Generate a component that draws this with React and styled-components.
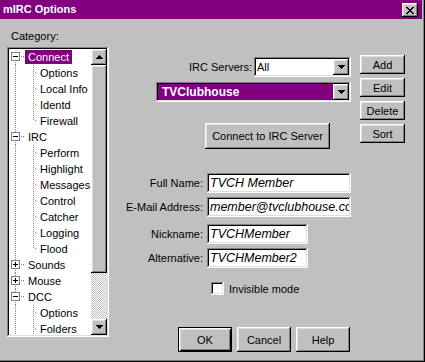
import React from 'react';
import styled, { createGlobalStyle, css } from 'styled-components';

const GlobalStyle = createGlobalStyle`
  html, body { margin: 0; padding: 0; background: #c0c0c0; }
  body { font-family: "Liberation Sans", Arial, sans-serif; font-size: 11px; color: #000; }
  * { box-sizing: border-box; }
`;

const raised = css`
  box-shadow: inset -1px -1px #000, inset 1px 1px #fff, inset -2px -2px #808080, inset 2px 2px #dfdfdf;
`;
const sunken = css`
  box-shadow: inset -1px -1px #fff, inset 1px 1px #808080, inset -2px -2px #dfdfdf, inset 2px 2px #000;
`;

const Window = styled.div`
  width: 425px;
  height: 362px;
  background: #c0c0c0;
  padding-right: 3px;
  box-shadow: inset -1px -1px #000, inset -2px -2px #808080;
  display: flex;
  flex-direction: column;
`;

const TitleBar = styled.div`
  height: 19px;
  flex: none;
  background: #800080;
  color: #fff;
  display: flex;
  justify-content: space-between;
  padding: 0 4px 0 3px;
`;

const TitleText = styled.span`
  font-weight: bold;
  font-size: 11px;
  line-height: 19px;
`;

const CloseButton = styled.div`
  width: 16px;
  height: 14px;
  margin-top: 3px;
  background: #c0c0c0;
  ${raised};
  display: flex;
  align-items: center;
  justify-content: center;
`;

const Body = styled.div`
  flex: 1;
  display: flex;
  padding-left: 7px;
`;

const LeftColumn = styled.div`
  width: 102px;
  padding-top: 11px;
  display: flex;
  flex-direction: column;
`;

const CategoryLabel = styled.div`
  height: 13px;
  line-height: 13px;
  padding-left: 4px;
  margin-bottom: 4px;
`;

const TreeBox = styled.div`
  width: 102px;
  height: 290px;
  background: #fff;
  ${sunken};
  padding: 2px;
  display: flex;
`;

const TreeContent = styled.div`
  flex: 1;
  overflow: hidden;
  display: flex;
  flex-direction: column;
`;

const TreeRow = styled.div`
  height: 16px;
  flex: none;
  display: flex;
  align-items: center;
`;

const TreeLabel = styled.span`
  height: 14px;
  line-height: 14px;
  padding: 0 3px;
  white-space: nowrap;
  background: ${(p) => (p.$selected ? '#800080' : 'transparent')};
  color: ${(p) => (p.$selected ? '#fff' : '#000')};
`;

const ScrollBar = styled.div`
  width: 16px;
  display: flex;
  flex-direction: column;
`;

const ScrollButton = styled.div`
  width: 16px;
  height: 16px;
  flex: none;
  background: #c0c0c0;
  ${raised};
  display: flex;
  align-items: center;
  justify-content: center;
`;

const ScrollTrack = styled.div`
  flex: 1;
  display: flex;
  flex-direction: column;
  background-color: #c0c0c0;
  background-image: conic-gradient(#fff 25%, #c0c0c0 0 50%, #fff 0 75%, #c0c0c0 0);
  background-size: 2px 2px;
`;

const ScrollThumb = styled.div`
  height: ${(p) => p.$h}px;
  flex: none;
  background: #c0c0c0;
  ${raised};
`;

const RightPanel = styled.div`
  margin-left: 11px;
  display: flex;
  flex-direction: column;
`;

const ServerSection = styled.div`
  margin-top: 36px;
  margin-left: 36px;
  display: flex;
  gap: 9px;
`;

const ServerMain = styled.div`
  width: 195px;
  padding-top: 2px;
  display: flex;
  flex-direction: column;
`;

const ServerRow = styled.div`
  height: 20px;
  display: flex;
  align-items: center;
  justify-content: flex-end;
  gap: 2px;
`;

const Combo = styled.div`
  width: ${(p) => p.$w}px;
  height: 20px;
  margin-top: ${(p) => p.$mt || 0}px;
  background: #fff;
  ${sunken};
  padding: 2px;
  display: flex;
`;

const ComboValue = styled.div`
  flex: 1;
  line-height: 16px;
  padding-left: ${(p) => (p.$selected ? 4 : 1)}px;
  white-space: nowrap;
  overflow: hidden;
  background: ${(p) => (p.$selected ? '#800080' : '#fff')};
  color: ${(p) => (p.$selected ? '#fff' : '#000')};
  font-weight: ${(p) => (p.$selected ? 'bold' : 'normal')};
  font-size: ${(p) => (p.$selected ? 12 : 11)}px;
`;

const Button = styled.div`
  width: ${(p) => p.$w}px;
  height: ${(p) => p.$h}px;
  flex: none;
  margin-top: ${(p) => p.$mt || 0}px;
  margin-left: ${(p) => p.$ml || 0}px;
  background: #c0c0c0;
  display: flex;
  align-items: center;
  justify-content: center;
  white-space: nowrap;
  ${(p) =>
    p.$default
      ? css`
          box-shadow: inset 1px 1px #000, inset -1px -1px #000, inset 2px 2px #fff, inset -2px -2px #000,
            inset 3px 3px #dfdfdf, inset -3px -3px #808080;
        `
      : raised};
`;

const SideButtons = styled.div`
  width: 45px;
  display: flex;
  flex-direction: column;
  gap: 4px;
`;

const FieldsSection = styled.div`
  margin-top: 24px;
  display: flex;
  flex-direction: column;
`;

const FieldRow = styled.div`
  display: flex;
  align-items: center;
  gap: 4px;
  margin-top: ${(p) => p.$mt || 0}px;
`;

const FieldLabel = styled.label`
  width: 83px;
  text-align: right;
  white-space: nowrap;
`;

const TextInput = styled.input`
  width: ${(p) => p.$w}px;
  height: 20px;
  border: none;
  outline: none;
  margin: 0;
  padding: 0 2px 0 3px;
  background: #fff;
  ${sunken};
  font-family: "Liberation Sans", Arial, sans-serif;
  font-style: italic;
  font-size: 12.5px;
  color: #000;
`;

const CheckRow = styled.div`
  margin-top: 14px;
  margin-left: 91px;
  height: 13px;
  display: flex;
  align-items: center;
  gap: 5px;
`;

const CheckBox = styled.div`
  width: 13px;
  height: 13px;
  background: #fff;
  ${sunken};
`;

const ButtonRow = styled.div`
  margin-top: 32px;
  margin-left: 58px;
  display: flex;
  gap: 5px;
`;

const Arrow = ({ up }) => (
  <svg width="7" height="4" viewBox="0 0 7 4" shapeRendering="crispEdges">
    {up ? (
      <path d="M3 0h1v1h1v1h1v1h1v1H0V3h1V2h1V1h1z" fill="#000" />
    ) : (
      <path d="M0 0h7v1H6v1H5v1H4v1H3V3H2V2H1V1H0z" fill="#000" />
    )}
  </svg>
);

const CloseIcon = () => (
  <svg width="8" height="7" viewBox="0 0 8 7" shapeRendering="crispEdges">
    <path
      d="M0 0h2v1h1v1h2V1h1V0h2v1H7v1H6v1H5v1h1v1h1v1h1v1H6V6H5V5H3v1H2v1H0V6h1V5h1V4h1V3H2V2H1V1H0z"
      fill="#000"
    />
  </svg>
);

const Dot = '#808080';

const Guides = ({ item }) => {
  const dash = '1 1';
  if (item.level === 0) {
    return (
      <svg width="16" height="16" viewBox="0 0 16 16" shapeRendering="crispEdges" style={{ flex: 'none' }}>
        {!item.first && <line x1="6.5" y1="0" x2="6.5" y2="3" stroke={Dot} strokeDasharray={dash} />}
        <line x1="6.5" y1="12" x2="6.5" y2="16" stroke={Dot} strokeDasharray={dash} strokeDashoffset="1" />
        <line x1="11" y1="7.5" x2="16" y2="7.5" stroke={Dot} strokeDasharray={dash} strokeDashoffset="1" />
        <rect x="2.5" y="3.5" width="8" height="8" fill="#fff" stroke="#808080" />
        <line x1="4" y1="7.5" x2="9" y2="7.5" stroke="#000" />
        {!item.expanded && <line x1="6.5" y1="5" x2="6.5" y2="10" stroke="#000" />}
      </svg>
    );
  }
  return (
    <svg width="28" height="16" viewBox="0 0 28 16" shapeRendering="crispEdges" style={{ flex: 'none' }}>
      <line x1="6.5" y1="0" x2="6.5" y2="16" stroke={Dot} strokeDasharray={dash} />
      <line x1="24.5" y1="0" x2="24.5" y2={item.last ? 8 : 16} stroke={Dot} strokeDasharray={dash} />
      <line x1="25" y1="7.5" x2="28" y2="7.5" stroke={Dot} strokeDasharray={dash} strokeDashoffset="1" />
    </svg>
  );
};

const tree = [
  { label: 'Connect', level: 0, expanded: true, selected: true, first: true },
  { label: 'Options', level: 1 },
  { label: 'Local Info', level: 1 },
  { label: 'Identd', level: 1 },
  { label: 'Firewall', level: 1, last: true },
  { label: 'IRC', level: 0, expanded: true },
  { label: 'Perform', level: 1 },
  { label: 'Highlight', level: 1 },
  { label: 'Messages', level: 1 },
  { label: 'Control', level: 1 },
  { label: 'Catcher', level: 1 },
  { label: 'Logging', level: 1 },
  { label: 'Flood', level: 1, last: true },
  { label: 'Sounds', level: 0 },
  { label: 'Mouse', level: 0 },
  { label: 'DCC', level: 0, expanded: true },
  { label: 'Options', level: 1 },
  { label: 'Folders', level: 1 },
];

export default function App() {
  return (
    <>
      <GlobalStyle />
      <Window>
        <TitleBar>
          <TitleText>mIRC Options</TitleText>
          <CloseButton>
            <CloseIcon />
          </CloseButton>
        </TitleBar>
        <Body>
          <LeftColumn>
            <CategoryLabel>Category:</CategoryLabel>
            <TreeBox>
              <TreeContent>
                {tree.map((item, i) => (
                  <TreeRow key={i}>
                    <Guides item={item} />
                    <TreeLabel $selected={item.selected}>{item.label}</TreeLabel>
                  </TreeRow>
                ))}
              </TreeContent>
              <ScrollBar>
                <ScrollButton>
                  <Arrow up />
                </ScrollButton>
                <ScrollTrack>
                  <ScrollThumb $h={208} />
                </ScrollTrack>
                <ScrollButton>
                  <Arrow />
                </ScrollButton>
              </ScrollBar>
            </TreeBox>
          </LeftColumn>
          <RightPanel>
            <ServerSection>
              <ServerMain>
                <ServerRow>
                  <span>IRC Servers:</span>
                  <Combo $w={97}>
                    <ComboValue>All</ComboValue>
                    <ScrollButton>
                      <Arrow />
                    </ScrollButton>
                  </Combo>
                </ServerRow>
                <Combo $w={195} $mt={5}>
                  <ComboValue $selected>TVClubhouse</ComboValue>
                  <ScrollButton>
                    <Arrow />
                  </ScrollButton>
                </Combo>
                <Button $w={125} $h={26} $mt={21} $ml={49}>
                  Connect to IRC Server
                </Button>
              </ServerMain>
              <SideButtons>
                <Button $w={45} $h={19}>Add</Button>
                <Button $w={45} $h={19}>Edit</Button>
                <Button $w={45} $h={19}>Delete</Button>
                <Button $w={45} $h={19}>Sort</Button>
              </SideButtons>
            </ServerSection>
            <FieldsSection>
              <FieldRow>
                <FieldLabel>Full Name:</FieldLabel>
                <TextInput $w={144} readOnly value="TVCH Member" />
              </FieldRow>
              <FieldRow $mt={4}>
                <FieldLabel>E-Mail Address:</FieldLabel>
                <TextInput $w={144} readOnly value="member@tvclubhouse.com" />
              </FieldRow>
              <FieldRow $mt={7}>
                <FieldLabel>Nickname:</FieldLabel>
                <TextInput $w={101} readOnly value="TVCHMember" />
              </FieldRow>
              <FieldRow $mt={4}>
                <FieldLabel>Alternative:</FieldLabel>
                <TextInput $w={101} readOnly value="TVCHMember2" />
              </FieldRow>
            </FieldsSection>
            <CheckRow>
              <CheckBox />
              <span>Invisible mode</span>
            </CheckRow>
            <ButtonRow>
              <Button $w={54} $h={25} $default>OK</Button>
              <Button $w={54} $h={25}>Cancel</Button>
              <Button $w={54} $h={25}>Help</Button>
            </ButtonRow>
          </RightPanel>
        </Body>
      </Window>
    </>
  );
}
